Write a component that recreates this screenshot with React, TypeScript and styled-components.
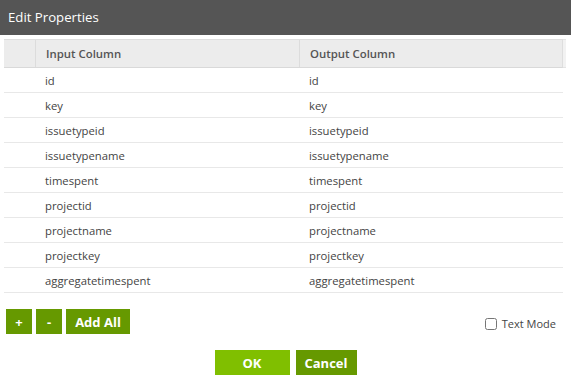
import styled, { createGlobalStyle } from 'styled-components';

const GlobalStyle = createGlobalStyle`
  html, body {
    margin: 0;
    padding: 0;
    background: #ffffff;
  }
  body {
    font-family: "Open Sans", "DejaVu Sans", sans-serif;
  }
`;

const Dialog = styled.div`
  width: 571px;
  height: 385px;
  background: #ffffff;
  display: flex;
  flex-direction: column;
`;

const TitleBar = styled.div`
  height: 35px;
  background: #555555;
  color: #ffffff;
  font-size: 13.2px;
  display: flex;
  align-items: center;
  padding-left: 8px;
  padding-bottom: 1px;
  box-sizing: border-box;
`;

const TableArea = styled.div`
  margin: 4px 0 0 4px;
  display: flex;
`;

const Table = styled.div`
  width: 559px;
`;

const Gutter = styled.div`
  width: 3px;
  height: 29px;
  background: #f2f2f2;
  border-top: 1px solid #e4e4e4;
  border-bottom: 1px solid #e4e4e4;
  box-sizing: border-box;
`;

const Row = styled.div<{ $header?: boolean }>`
  display: grid;
  grid-template-columns: 31px 264px 264px;
  height: ${({ $header }) => ($header ? '29px' : '25px')};
  box-sizing: border-box;
  background: ${({ $header }) => ($header ? '#ececec' : '#ffffff')};
  border-top: ${({ $header }) => ($header ? '1px solid #dedede' : 'none')};
  border-right: ${({ $header }) => ($header ? '1px solid #dedede' : 'none')};
  border-bottom: 1px solid ${({ $header }) => ($header ? '#d9d9d9' : '#e8e8e8')};
`;

const Cell = styled.div<{ $header?: boolean; $divider?: boolean }>`
  display: flex;
  align-items: center;
  padding-left: 10px;
  font-size: ${({ $header }) => ($header ? '11.4px' : '11.3px')};
  color: ${({ $header }) => ($header ? '#555555' : '#444444')};
  font-weight: ${({ $header }) => ($header ? 600 : 400)};
  border-left: ${({ $divider }) => ($divider ? '1px solid #dcdcdc' : 'none')};
  box-sizing: border-box;
  white-space: nowrap;
`;

const Toolbar = styled.div`
  display: flex;
  align-items: center;
  justify-content: space-between;
  margin-top: 16px;
  padding: 0 15px 0 6px;
`;

const ButtonGroup = styled.div`
  display: flex;
  gap: 4px;
`;

const Button = styled.button<{ $variant?: 'light' | 'dark'; $width: number }>`
  width: ${({ $width }) => $width}px;
  height: 25px;
  border: none;
  padding: 0;
  margin: 0;
  background: ${({ $variant }) => ($variant === 'light' ? '#80bf00' : '#669900')};
  color: #ffffff;
  font-family: "Open Sans", "DejaVu Sans", sans-serif;
  font-weight: 700;
  font-size: 13px;
  cursor: pointer;
`;

const CheckLabel = styled.label`
  display: flex;
  align-items: center;
  gap: 5px;
  font-size: 11px;
  color: #444444;
  margin-top: 4px;
`;

const Check = styled.input`
  width: 12px;
  height: 12px;
  margin: 0;
`;

const Footer = styled.div`
  display: flex;
  justify-content: center;
  gap: 6px;
  margin-top: 16px;
`;

const rows = [
  'id',
  'key',
  'issuetypeid',
  'issuetypename',
  'timespent',
  'projectid',
  'projectname',
  'projectkey',
  'aggregatetimespent',
];

export default function App() {
  return (
    <>
      <GlobalStyle />
      <Dialog>
        <TitleBar>Edit Properties</TitleBar>
        <TableArea>
          <Table>
            <Row $header>
              <Cell $header />
              <Cell $header $divider>Input Column</Cell>
              <Cell $header $divider>Output Column</Cell>
            </Row>
            {rows.map((name) => (
              <Row key={name}>
                <Cell />
                <Cell>{name}</Cell>
                <Cell>{name}</Cell>
              </Row>
            ))}
          </Table>
          <Gutter />
        </TableArea>
        <Toolbar>
          <ButtonGroup>
            <Button $width={26}>+</Button>
            <Button $width={26}>-</Button>
            <Button $width={64}>Add All</Button>
          </ButtonGroup>
          <CheckLabel>
            <Check type="checkbox" />
            Text Mode
          </CheckLabel>
        </Toolbar>
        <Footer>
          <Button $variant="light" $width={75}>OK</Button>
          <Button $width={61}>Cancel</Button>
        </Footer>
      </Dialog>
    </>
  );
}
